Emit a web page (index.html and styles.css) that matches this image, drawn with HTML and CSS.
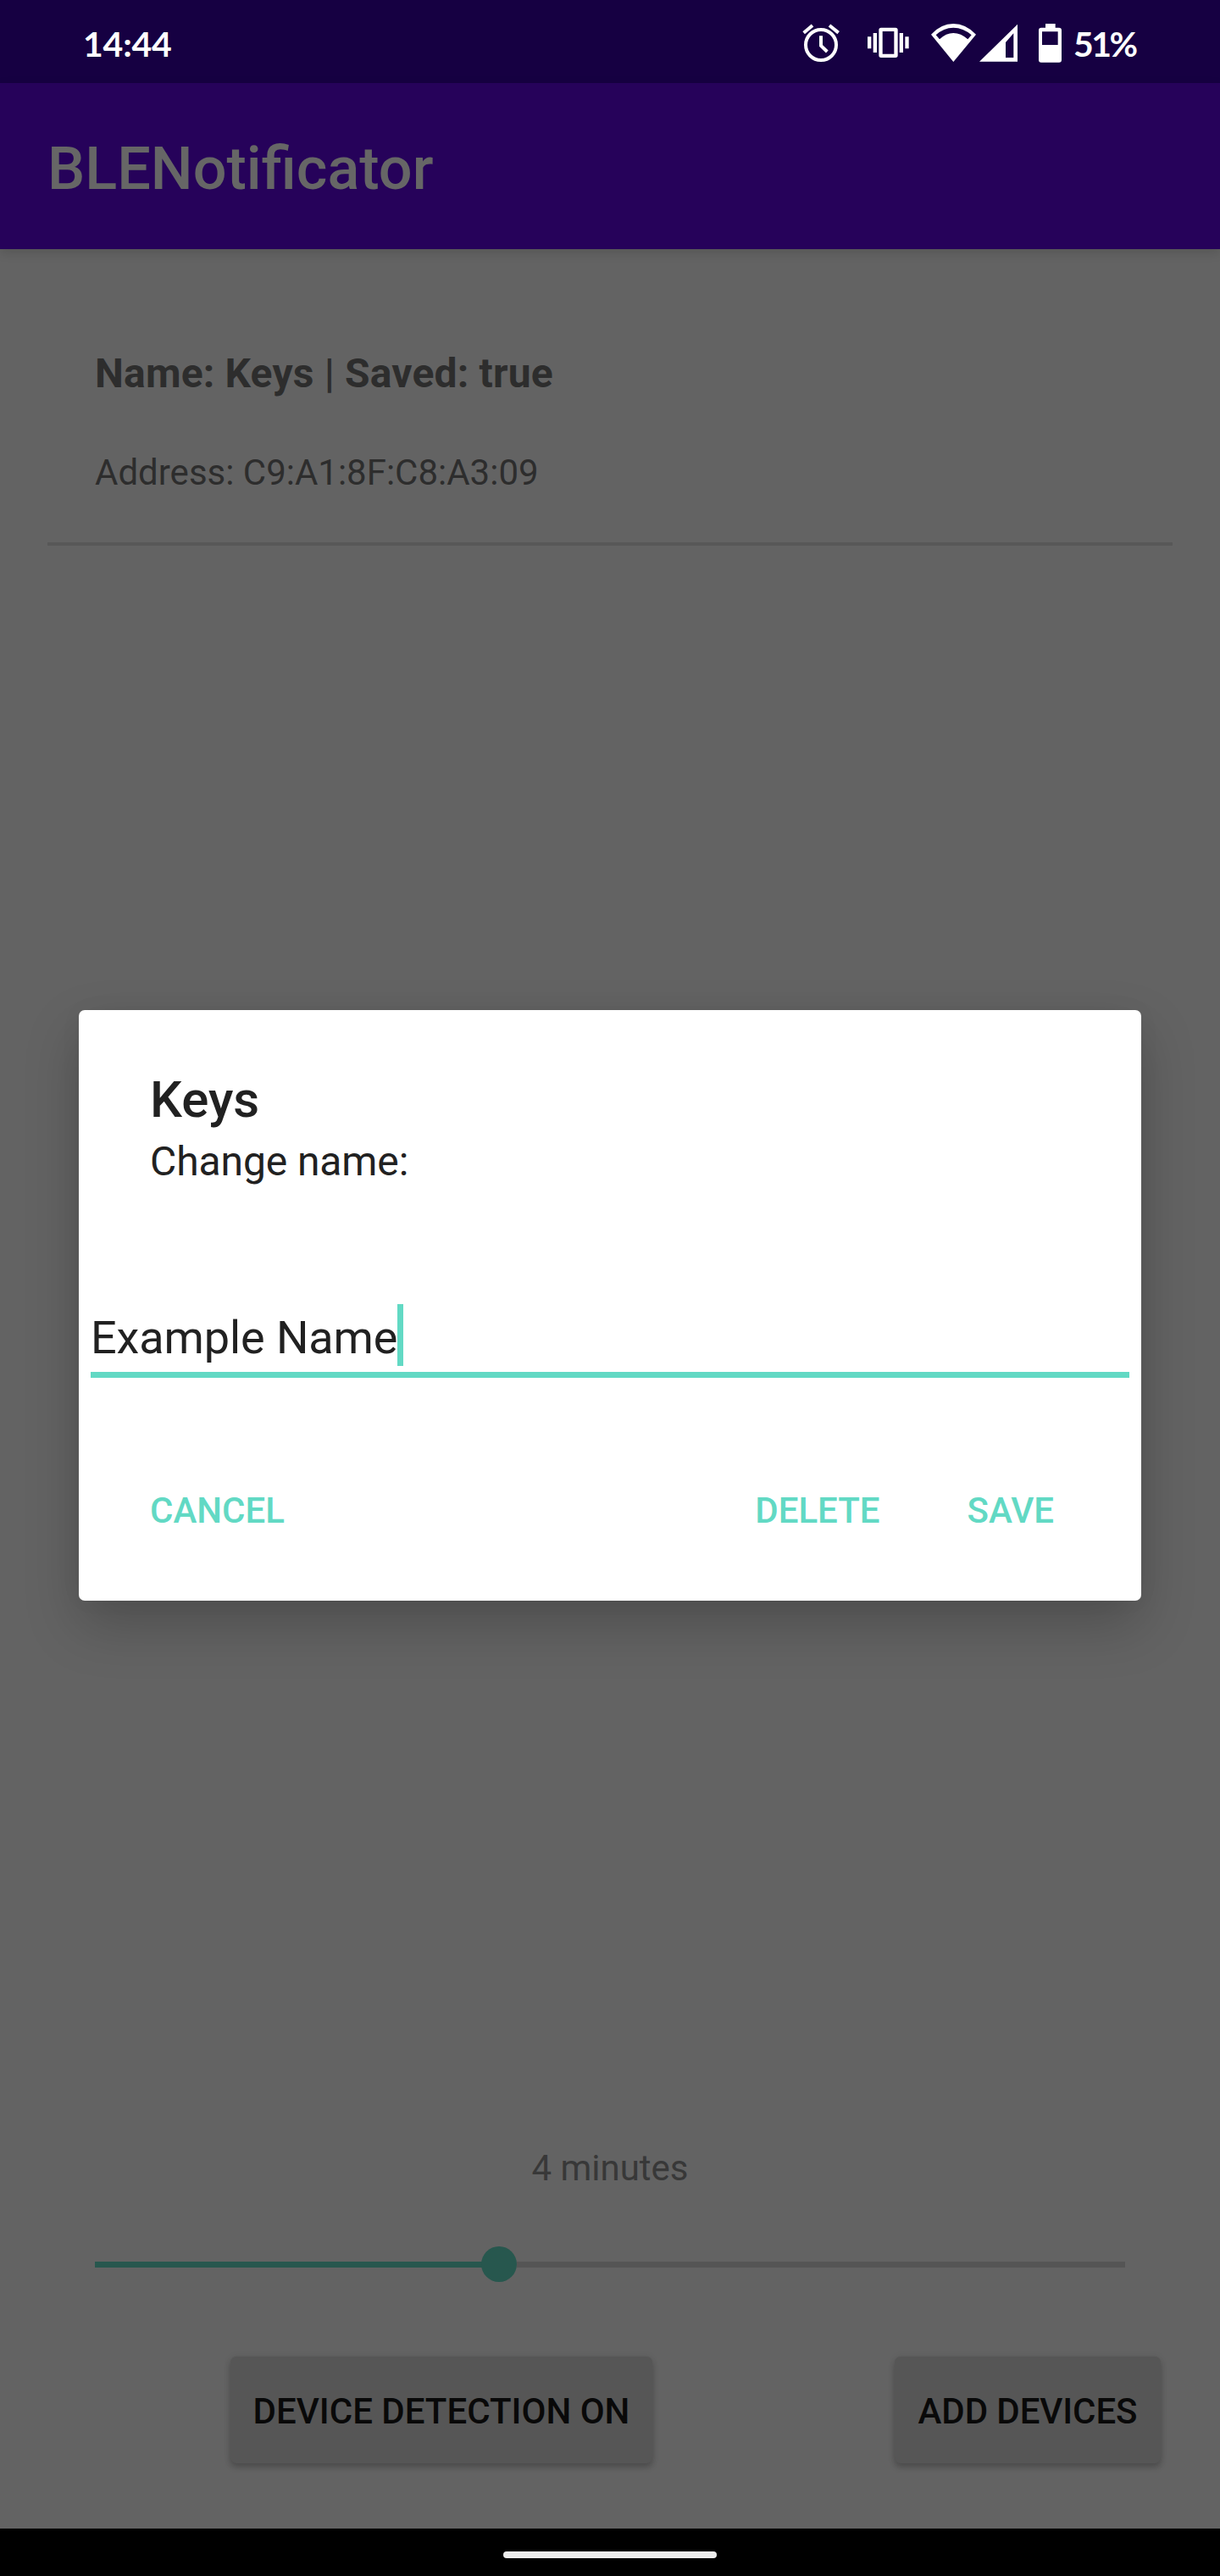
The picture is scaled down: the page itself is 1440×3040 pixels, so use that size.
FILE: index.html
```html
<!DOCTYPE html>
<html lang="en">
<head>
<meta charset="utf-8">
<title>BLENotificator</title>
<link rel="stylesheet" href="styles.css">
</head>
<body>
<div class="screen">
  <header class="status">
    <span class="clock">14:44</span>
    <div class="icons">
      <svg class="alarm" viewBox="141 75 132 150" fill="none" stroke="#fff" stroke-width="12">
        <circle cx="207" cy="159" r="54"/>
        <path d="M207 127V162L229 183M146 116L177 90M237 90L269 116"/>
      </svg>
      <svg class="vibrate" viewBox="372 75 147 150" fill="#fff">
        <path fill-rule="evenodd" d="M420 98H471Q479 98 479 106V196Q479 204 471 204H420Q412 204 412 196V106Q412 98 420 98ZM425 111V191H466V111Z"/>
        <path d="M392 117H405V186H392ZM372 130H385V172H372ZM485 117H498V186H485ZM505 130H518V172H505Z"/>
      </svg>
      <svg class="wifi" viewBox="597 75 159 150" fill="#fff">
        <path fill-rule="evenodd" d="M676 219L597 122Q632 84 676 84T756 122ZM614 124L627 139Q650 117 676 117T727 139L740 124Q711 98 676 98T614 124Z"/>
      </svg>
      <svg class="signal" viewBox="768 75 135 150" fill="#fff">
        <path fill-rule="evenodd" d="M768 218L903 86V218ZM861 150V204H889V118Z"/>
      </svg>
      <svg class="battery" viewBox="978 75 81 150" fill="#fff">
        <path fill-rule="evenodd" d="M1002 84H1037V98H1050Q1059 98 1059 107V212Q1059 221 1050 221H987Q978 221 978 212V107Q978 98 987 98H1002ZM990 112V159H1046V112Z"/>
      </svg>
      <span class="percent">51%</span>
    </div>
  </header>
  <div class="appbar"><h1>BLENotificator</h1></div>
  <main class="content">
    <div class="device">
      <div class="device-name">Name: Keys | Saved: true</div>
      <div class="device-address">Address: C9:A1:8F:C8:A3:09</div>
    </div>
    <div class="controls">
      <div class="interval">4 minutes</div>
      <div class="slider"><div class="filled"></div><div class="thumb"></div><div class="rest"></div></div>
      <div class="actions">
        <button class="raised detection">DEVICE DETECTION ON</button>
        <button class="raised add">ADD DEVICES</button>
      </div>
    </div>
  </main>
  <footer class="navbar"><div class="pill"></div></footer>
  <section class="dialog">
    <h2>Keys</h2>
    <p class="message">Change name:</p>
    <div class="field"><span>Example Name</span><i class="caret"></i></div>
    <div class="dialog-actions">
      <button class="flat">CANCEL</button>
      <span class="space"></span>
      <button class="flat">DELETE</button>
      <button class="flat">SAVE</button>
    </div>
  </section>
</div>
</body>
</html>
```
FILE: styles.css
```css
* { box-sizing: border-box; margin: 0; padding: 0; }
body { font-family: Roboto, "Liberation Sans", sans-serif; background: #000; }
button { font: inherit; border: 0; background: none; white-space: nowrap; }

.screen {
  position: relative;
  width: 1440px;
  height: 3040px;
  display: flex;
  flex-direction: column;
  overflow: hidden;
  background: #636363;
}

.status {
  height: 98px;
  flex: none;
  display: flex;
  justify-content: space-between;
  align-items: flex-start;
  padding: 25px 97px 0 98px;
  background: #160042;
  color: #fff;
  font: 700 41px/54px Lato, sans-serif;
}
.clock { letter-spacing: -.2px; }
.percent { font-size: 41px; letter-spacing: -2.5px; }
.icons { display: flex; width: 396px; }
.icons svg { height: 50px; flex: none; }
.alarm { width: 44px; margin-right: 33px; }
.vibrate { width: 49px; margin-right: 26px; }
.wifi { width: 53px; margin-right: 4px; }
.signal { width: 45px; margin-right: 25px; }
.battery { width: 27px; margin-right: 14px; }

.appbar {
  height: 196px;
  flex: none;
  display: flex;
  align-items: center;
  padding: 5px 56px 0;
  background: #26025a;
  color: #666;
  box-shadow: 0 4px 12px rgba(0, 0, 0, .14);
}
.appbar h1 { font-size: 70.2px; font-weight: 500; line-height: 82px; }

.content { flex: 1; display: flex; flex-direction: column; justify-content: space-between; }

.device {
  height: 350px;
  margin: 0 56px;
  padding: 119px 56px 0;
  border-bottom: 4px solid #585858;
  color: #2d2d2d;
}
.device-name { font-size: 48px; line-height: 56px; font-weight: 700; letter-spacing: .17px; }
.device-address { font-size: 42px; line-height: 50px; margin-top: 64px; }

.controls { padding: 0 70px 77px 112px; }
.interval { font-size: 42px; line-height: 50px; text-align: center; margin-right: -70px; margin-left: -112px; color: #383838; }
.slider { display: flex; align-items: center; width: 1216px; height: 42px; margin-top: 67px; }
.filled { width: 458px; height: 7px; background: #27574e; }
.thumb { width: 42px; height: 42px; flex: none; border-radius: 50%; background: #27574e; margin-left: -2px; }
.rest { flex: 1; height: 7px; background: #555; }
.actions { display: flex; justify-content: space-between; padding-left: 160px; margin-top: 88px; }
.raised {
  height: 126px;
  padding-top: 2px;
  border-radius: 7px;
  background: #565656;
  color: #090909;
  font-size: 42px;
  font-weight: 500;
  box-shadow: 0 5px 7px rgba(0, 0, 0, .18), 0 1px 8px rgba(0, 0, 0, .1);
}
.detection { width: 498px; }
.add { width: 314px; letter-spacing: -.1px; }

.navbar { height: 56px; flex: none; display: flex; justify-content: center; align-items: center; padding-top: 6px; background: #000; }
.pill { width: 252px; height: 8px; border-radius: 4px; background: #ececec; }

.dialog {
  position: absolute;
  left: 93px;
  top: 1192px;
  width: 1254px;
  height: 697px;
  padding: 71px 14px 0;
  border-radius: 7px;
  background: #fff;
  color: #212121;
  box-shadow: 0 28px 64px rgba(0, 0, 0, .21), 0 0 30px rgba(0, 0, 0, .03);
}
.dialog h2 { font-size: 60px; line-height: 70px; font-weight: 500; padding-left: 70px; }
.message { font-size: 48px; line-height: 56px; padding-left: 70px; margin-top: 10px; letter-spacing: -.1px; }
.field {
  display: flex;
  align-items: flex-start;
  height: 87px;
  margin-top: 140px;
  border-bottom: 7px solid #62d9c4;
  font-size: 54px;
  line-height: 79px;
  letter-spacing: -.1px;
}
.caret { width: 7px; height: 73px; background: #62d9c4; }
.dialog-actions { display: flex; margin-top: 132px; padding: 0 89px 0 70px; gap: 103px; }
.space { flex: 1; }
.flat { font-size: 42px; line-height: 50px; font-weight: 500; color: #62d9c4; }
```
